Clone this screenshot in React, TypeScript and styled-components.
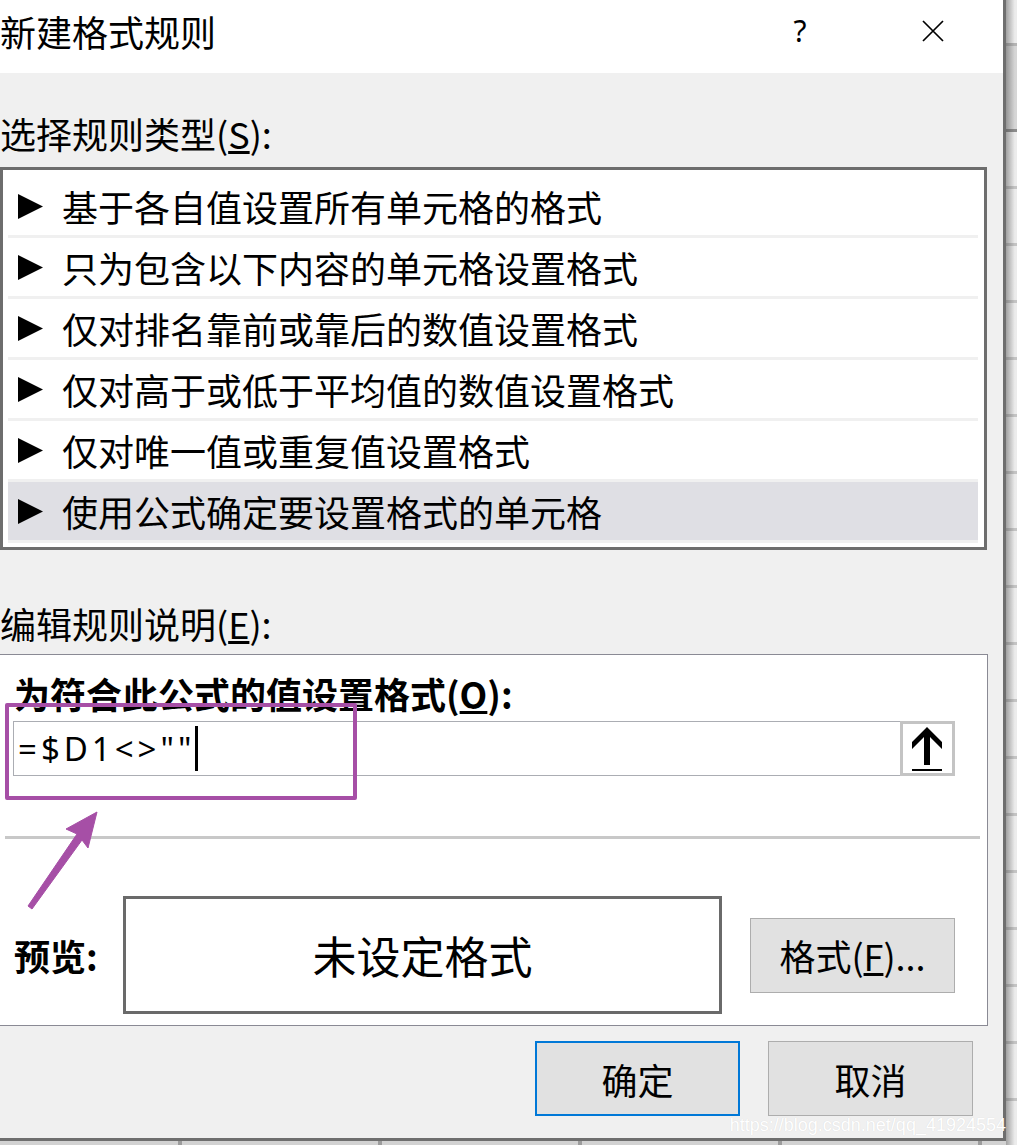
import React from "react";
import styled, { createGlobalStyle } from "styled-components";

const FONT = `"Noto Sans CJK SC", "Noto Sans", sans-serif`;

const GlobalStyle = createGlobalStyle`
  html, body {
    margin: 0;
    padding: 0;
    background: #f0f0f0;
  }
  body {
    font-family: ${FONT};
    overflow: hidden;
  }
  *, *::before, *::after {
    box-sizing: border-box;
  }
`;

const Page = styled.div`
  position: relative;
  width: 1017px;
  height: 1145px;
  display: grid;
  grid-template-columns: 1006px 11px;
  grid-template-rows: 1141px 4px;
  overflow: hidden;
  font-family: ${FONT};
  color: #000;
`;

const Dialog = styled.div`
  grid-column: 1;
  grid-row: 1;
  display: flex;
  flex-direction: column;
  background: #f0f0f0;
  border-right: 3px solid #6e6e6e;
  border-bottom: 3px solid #6e6e6e;
`;

/* spreadsheet peeking out behind the dialog */
const SheetRight = styled.div`
  grid-column: 2;
  grid-row: 1 / span 2;
  background:
    linear-gradient(to right, rgba(70, 70, 70, 0.45), rgba(70, 70, 70, 0) 80%),
    linear-gradient(to bottom, #ececec 0 43px, #b4b4b4 43px 46px, #d6d6d6 46px 129px, #8c8c8c 129px 132px, transparent 132px),
    repeating-linear-gradient(to bottom, #ececec 0 54px, #c4c4c4 54px 57px);
  background-position: 0 0, 0 0, 0 18px;
`;

const SheetBottom = styled.div`
  grid-column: 1;
  grid-row: 2;
  background: repeating-linear-gradient(
    to right,
    #d2d2d2 0 178px,
    #9c9c9c 178px 182px,
    #d2d2d2 182px 200px
  );
`;

const TitleBar = styled.header`
  flex: none;
  height: 73px;
  display: flex;
  align-items: center;
  padding: 0 40px 12px 0;
  background: #fff;
`;

const Title = styled.h1`
  flex: 1;
  margin: 0;
  font-size: 36px;
  font-weight: 400;
  line-height: 44px;
`;

const TitleButton = styled.button`
  width: 60px;
  height: 60px;
  display: flex;
  align-items: center;
  justify-content: center;
  padding: 0;
  border: none;
  background: transparent;
  font-family: "Noto Sans", sans-serif;
  font-size: 30px;
  color: #000;
`;

const TitleGap = styled.div`
  width: 73px;
`;

const Body = styled.div`
  display: flex;
  flex-direction: column;
`;

const SectionLabel = styled.div<{ $top: number }>`
  margin-top: ${(p) => p.$top}px;
  font-size: 36px;
  line-height: 44px;
  height: 44px;
  white-space: nowrap;
`;

const ListBox = styled.ul`
  width: 987px;
  margin: 12px 0 0;
  padding: 7px 6px 4px 5px;
  list-style: none;
  background: #fff;
  border: 3px solid #6d6d6d;
`;

const RuleRow = styled.li<{ $selected?: boolean }>`
  height: 61px;
  display: flex;
  align-items: center;
  gap: 19px;
  padding-left: 10px;
  border-bottom: 3px solid #f0f0f0;
  background: ${(p) => (p.$selected ? "#dfdfe4" : "transparent")};
  font-size: 36px;
  line-height: 1;
  white-space: nowrap;
`;

const Panel = styled.section`
  width: 988px;
  height: 372px;
  margin-top: 9px;
  padding-top: 16px;
  background: #fff;
  border: 1px solid #8a8a94;
  border-left: none;
  display: flex;
  flex-direction: column;
`;

const BoldLabel = styled.div`
  margin-left: 14px;
  font-size: 36px;
  font-weight: 700;
  line-height: 44px;
  white-space: nowrap;
`;

const FormulaInput = styled.div`
  width: 942px;
  height: 55px;
  margin: 6px 0 0 13px;
  display: flex;
  align-items: center;
  border: 1px solid #abadb3;
  background: #fff;
`;

const FormulaText = styled.div`
  flex: 1;
  display: flex;
  align-items: center;
  padding-left: 4px;
  font-family: "Noto Sans", sans-serif;
  font-size: 33px;
  letter-spacing: 4px;
  line-height: 1;
`;

const Caret = styled.span`
  display: inline-block;
  width: 3px;
  height: 45px;
  background: #000;
`;

const RefButton = styled.button`
  width: 55px;
  height: 55px;
  margin: -1px -1px -1px 0;
  padding: 0;
  border: 3px solid #c4c4c4;
  background: #fff;
  display: flex;
`;

const Divider = styled.hr`
  width: 975px;
  height: 3px;
  margin: 60px 0 0 5px;
  border: none;
  background: #c8c8c8;
`;

const PreviewRow = styled.div`
  margin-top: 57px;
  display: flex;
  align-items: center;
`;

const PreviewLabel = styled.div`
  width: 123px;
  padding-left: 14px;
  font-size: 36px;
  font-weight: 700;
  line-height: 44px;
`;

const PreviewBox = styled.div`
  width: 599px;
  height: 118px;
  display: flex;
  align-items: center;
  justify-content: center;
  border: 3px solid #6a6a6a;
  font-size: 44px;
  line-height: 1;
`;

const Button = styled.button<{ $primary?: boolean }>`
  width: 205px;
  height: 75px;
  padding: 0;
  display: flex;
  align-items: center;
  justify-content: center;
  background: #e1e1e1;
  border: ${(p) => (p.$primary ? "2px solid #0078d7" : "1px solid #adadad")};
  font-family: ${FONT};
  font-size: 36px;
  line-height: 1;
  color: #000;
  white-space: nowrap;
`;

const FormatButton = styled(Button)`
  margin-left: 28px;
`;

const Footer = styled.footer`
  margin-top: 15px;
  padding-right: 30px;
  display: flex;
  justify-content: flex-end;
  gap: 28px;
`;

const Watermark = styled.div`
  position: absolute;
  right: 11px;
  bottom: 9px;
  font-family: "Liberation Sans", Arial, sans-serif;
  font-size: 18px;
  color: #ffffff;
  text-shadow: 0 0 1px rgba(0, 0, 0, 0.12);
`;

const MarkBox = styled.div`
  position: absolute;
  left: 5px;
  top: 703px;
  width: 352px;
  height: 97px;
  border: 4px solid #a64fa6;
  border-radius: 2px;
`;

const MarkArrow = styled.svg`
  position: absolute;
  left: 20px;
  top: 805px;
`;

const Triangle = () => (
  <svg width="25" height="25" viewBox="0 0 25 25">
    <polygon points="0,0 25,12.5 0,25" fill="#000" />
  </svg>
);

const CloseIcon = () => (
  <svg width="22" height="22" viewBox="0 0 22 22">
    <path d="M1 1 L21 21 M21 1 L1 21" stroke="#000" strokeWidth="1.7" />
  </svg>
);

const UpArrow = () => (
  <svg width="49" height="49" viewBox="3 3 49 49">
    <polygon
      points="27,6 42,21 42,28 30,16 30,44 24,44 24,16 12,28 12,21"
      fill="#000"
    />
    <rect x="12" y="48" width="30" height="2" fill="#000" />
  </svg>
);

const rules = [
  "基于各自值设置所有单元格的格式",
  "只为包含以下内容的单元格设置格式",
  "仅对排名靠前或靠后的数值设置格式",
  "仅对高于或低于平均值的数值设置格式",
  "仅对唯一值或重复值设置格式",
  "使用公式确定要设置格式的单元格",
];

export default function App() {
  return (
    <>
      <GlobalStyle />
      <Page>
        <Dialog>
          <TitleBar>
            <Title>新建格式规则</Title>
            <TitleButton>?</TitleButton>
            <TitleGap />
            <TitleButton>
              <CloseIcon />
            </TitleButton>
          </TitleBar>

          <Body>
            <SectionLabel $top={38}>
              选择规则类型(<u>S</u>):
            </SectionLabel>
            <ListBox>
              {rules.map((rule, i) => (
                <RuleRow key={rule} $selected={i === rules.length - 1}>
                  <Triangle />
                  {rule}
                </RuleRow>
              ))}
            </ListBox>

            <SectionLabel $top={51}>
              编辑规则说明(<u>E</u>):
            </SectionLabel>
            <Panel>
              <BoldLabel>
                为符合此公式的值设置格式(<u>O</u>):
              </BoldLabel>
              <FormulaInput>
                <FormulaText>
                  =$D1&lt;&gt;""
                  <Caret />
                </FormulaText>
                <RefButton>
                  <UpArrow />
                </RefButton>
              </FormulaInput>
              <Divider />
              <PreviewRow>
                <PreviewLabel>预览:</PreviewLabel>
                <PreviewBox>未设定格式</PreviewBox>
                <FormatButton>
                  格式(<u>F</u>)...
                </FormatButton>
              </PreviewRow>
            </Panel>

            <Footer>
              <Button $primary>确定</Button>
              <Button>取消</Button>
            </Footer>
          </Body>
        </Dialog>
        <SheetRight />
        <SheetBottom />

        <MarkBox />
        <MarkArrow width="90" height="110" viewBox="20 805 90 110">
          <polygon
            points="97,812 88,848 82,840 32,909 28,906 77,834 66,829"
            fill="#a64fa6"
            stroke="#a64fa6"
            strokeWidth="1"
            strokeLinejoin="round"
          />
        </MarkArrow>
        <Watermark>https://blog.csdn.net/qq_41924554</Watermark>
      </Page>
    </>
  );
}
